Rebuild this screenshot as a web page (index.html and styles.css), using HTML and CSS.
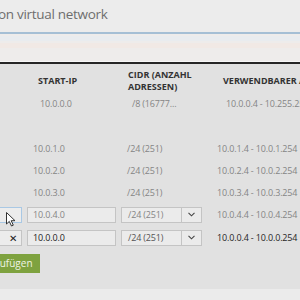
FILE: index.html
```html
<!DOCTYPE html>
<html>
<head>
    <meta charset="UTF-8">
    <title>Adressraum</title>
    <link rel="stylesheet" href="styles.css">
</head>
<body>

<!--标题-->
<div class="blade-title">on virtual network</div>
<!--搜索区域-->
<div class="blade-search">
    <div class="stripe-a"></div>
    <div class="stripe-b"></div>
</div>

<div class="subnets">
    <!--表头-->
    <div class="row head">
        <div></div>
        <div class="c1">START-IP</div>
        <div class="c2">CIDR (ANZAHL<br>ADRESSEN)</div>
        <div class="c3">VERWENDBARER ADRESSBEREICH</div>
    </div>
    <div class="row parent">
        <div></div>
        <div class="c1">10.0.0.0</div>
        <div class="c2">/8 (16777...</div>
        <div class="c3">10.0.0.4 - 10.255.255.254</div>
    </div>
    <div class="spacer"></div>
    <div class="row">
        <div></div>
        <div class="c1">10.0.1.0</div>
        <div class="c2">/24 (251)</div>
        <div class="c3">10.0.1.4 - 10.0.1.254</div>
    </div>
    <div class="row">
        <div></div>
        <div class="c1">10.0.2.0</div>
        <div class="c2">/24 (251)</div>
        <div class="c3">10.0.2.4 - 10.0.2.254</div>
    </div>
    <div class="row">
        <div></div>
        <div class="c1">10.0.3.0</div>
        <div class="c2">/24 (251)</div>
        <div class="c3">10.0.3.4 - 10.0.3.254</div>
    </div>
    <!--编辑行-->
    <div class="row edit">
        <div class="act focus">
            <svg class="cursor" width="11" height="15" viewBox="0 0 11 15">
                <path d="M0.5 0.5 L0.5 12 L3.3 9.4 L5.5 14 L7.3 13.2 L5.2 8.7 L9 8.7 Z" fill="#fff" stroke="#333" stroke-width="1"/>
            </svg>
        </div>
        <div><input class="txt" type="text" placeholder="10.0.4.0"></div>
        <div class="sel"><span>/24 (251)</span><i>
            <svg width="7" height="5" viewBox="0 0 7 5"><path d="M0.5 0.8 L3.5 3.8 L6.5 0.8" fill="none" stroke="#444" stroke-width="1.1"/></svg>
        </i></div>
        <div class="c3">10.0.4.4 - 10.0.4.254</div>
    </div>
    <div class="row edit filled">
        <div class="act">&#x2715;</div>
        <div><input class="txt" type="text" value="10.0.0.0"></div>
        <div class="sel"><span>/24 (251)</span><i>
            <svg width="7" height="5" viewBox="0 0 7 5"><path d="M0.5 0.8 L3.5 3.8 L6.5 0.8" fill="none" stroke="#444" stroke-width="1.1"/></svg>
        </i></div>
        <div class="c3">10.0.0.4 - 10.0.0.254</div>
    </div>
    <div class="add-bar">
        <span class="btn-add">Hinzufügen</span>
    </div>
</div>

<div class="blade-footer"></div>

</body>
</html>
```

FILE: styles.css
```css
* {
    padding: 0;
    margin: 0;
    box-sizing: border-box;
}

body {
    background-color: #e1e1e1;
    font-family: "Open Sans", "Noto Sans", sans-serif;
    overflow: hidden;
}

.blade-title {
    height: 32px;
    background-color: #ececec;
    color: #6e6e6e;
    font-size: 13.5px;
    letter-spacing: -0.3px;
    line-height: 28px;
    margin-left: -2px;
    white-space: nowrap;
}

.blade-search {
    height: 29px;
    border-top: 2px solid #a5bfd5;
    background-color: #eeeceb;
    padding-top: 2px;
}

.stripe-a {
    height: 5px;
    background-color: #e9ecef;
}

.stripe-b {
    height: 5px;
    margin-top: 2px;
    background-color: #f1e9e5;
}

.subnets {
    border-top: 1px solid #f7f7f7;
}

.row {
    display: grid;
    grid-template-columns: 21px 95px 96px 1fr;
    align-items: center;
    height: 22px;
    font-size: 9px;
    letter-spacing: -0.15px;
    color: #858585;
    white-space: nowrap;
}

.row .c1 {
    padding-left: 12px;
}

.row .c2 {
    padding-left: 11px;
}

.row .c3 {
    padding-left: 5px;
}

.row.head {
    height: 35px;
    border-top: 2px solid #262626;
    font-weight: bold;
    color: #333;
    line-height: 12px;
    letter-spacing: 0;
}

.row.head .c1 {
    padding-left: 17px;
}

.row.head .c2 {
    padding-left: 12px;
}

.row.head .c3 {
    padding-left: 11px;
}

.row.parent {
    height: 12px;
}

.row.parent .c1 {
    padding-left: 19px;
}

.row.parent .c2 {
    padding-left: 16px;
}

.row.parent .c3 {
    padding-left: 14px;
}

.spacer {
    height: 28px;
}

.row.edit {
    height: 23px;
}

.act {
    position: relative;
    height: 16px;
    width: 34px;
    margin-left: -12px;
    border: 1px solid #c4c4c4;
    background-color: #ececec;
    display: flex;
    justify-content: flex-end;
    align-items: center;
    padding-right: 4px;
    font-size: 10px;
    color: #222;
}

.act.focus {
    border-color: #a9c8e4;
}

.cursor {
    position: absolute;
    left: 17px;
    top: 4px;
}

.txt {
    display: block;
    width: 89px;
    height: 16px;
    margin-left: 6px;
    border: 1px solid #c4c4c4;
    background-color: #ebebeb;
    font: 9px "Open Sans", "Noto Sans", sans-serif;
    letter-spacing: -0.15px;
    padding-left: 5px;
    color: #222;
    outline: none;
}

.txt::placeholder {
    color: #858585;
}

.sel {
    display: flex;
    width: 81px;
    height: 16px;
    margin-left: 5px;
    border: 1px solid #c4c4c4;
    background-color: #ebebeb;
    align-items: center;
}

.sel span {
    flex: 1;
    padding-left: 6px;
}

.sel i {
    width: 20px;
    height: 100%;
    border-left: 1px solid #c4c4c4;
    display: flex;
    align-items: center;
    justify-content: center;
}

.row.filled {
    color: #262626;
}

.row.filled .sel span {
    color: #555;
}

.add-bar {
    height: 40px;
    padding-top: 1px;
}

.btn-add {
    display: inline-block;
    height: 19px;
    line-height: 19px;
    margin-left: -28px;
    padding: 0 7px;
    background-color: #7ea23f;
    color: #eef4e4;
    font-size: 10px;
}

.blade-footer {
    height: 20px;
    background-color: #ebebeb;
}
```
